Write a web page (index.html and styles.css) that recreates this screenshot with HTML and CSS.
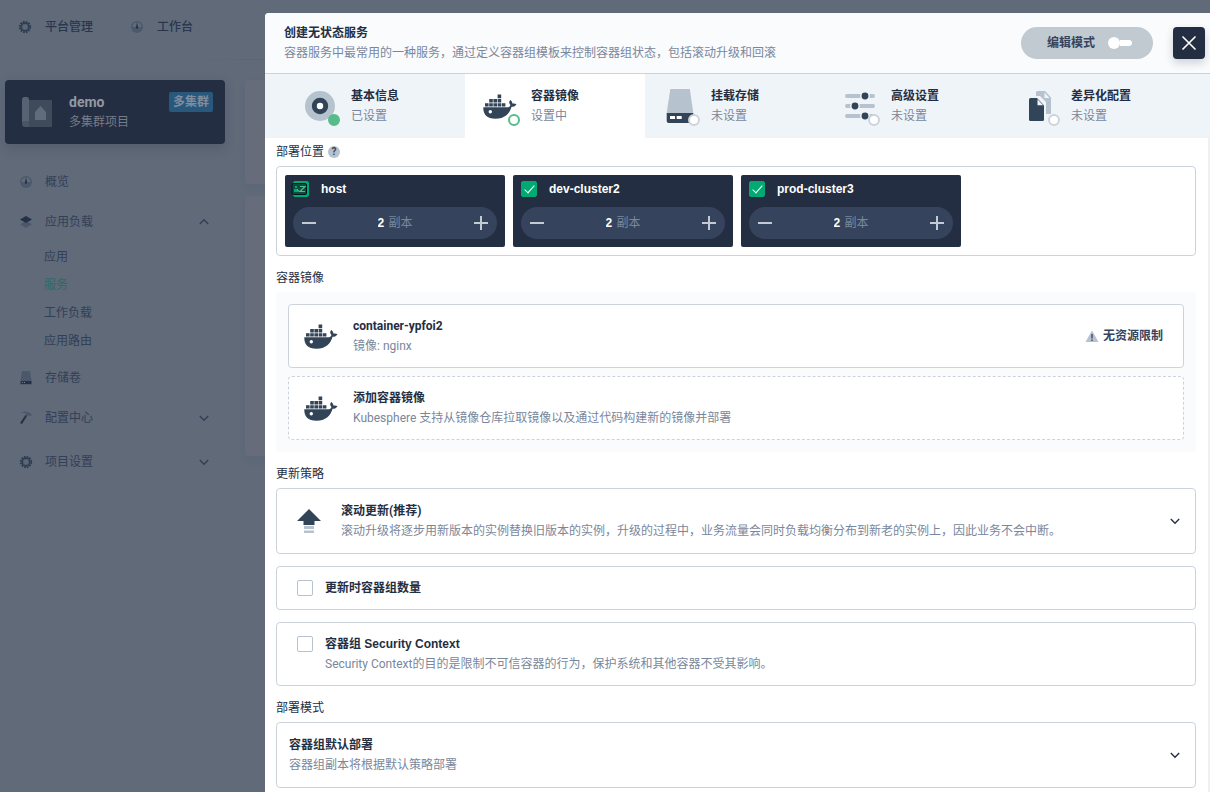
FILE: index.html
```html
<!DOCTYPE html>
<html lang="zh-CN">
  <head>
    <meta charset="utf-8" />
    <title>创建无状态服务</title>
    <link rel="stylesheet" href="styles.css">
  </head>
  <body>
    <!-- shared icons -->
    <svg class="sprite" aria-hidden="true">
      <symbol id="docker" viewBox="0 0 40 40">
        <path fill="#324558" d="M3.3 21.3H27c2 0 3-.9 3.4-2.300-1.500-1.500-1.600-3.500-.2-4.900 1.500.9 2.100 2.100 2.200 3.500 1.500-.3 3-.2 4.100.6-.9 1.700-2.600 2.600-4.900 2.600C29.500 28 24.500 32.800 15.500 32.800 7 32.800 3 28.500 3.300 21.300z" />
        <path fill="#324558" d="M5 17.200h3.600v3.300H5zM9.200 17.200h3.600v3.300H9.200zM13.400 17.200H17v3.300h-3.600zM17.600 17.200h3.600v3.300h-3.600zM21.800 17.200h3.600v3.300h-3.600zM9.200 13h3.600v3.500H9.200zM13.400 13H17v3.500h-3.600zM17.600 13h3.600v3.500h-3.600zM17.600 8.500h3.600v3.700h-3.600z" />
        <circle cx="10.300" cy="25.700" r="1.700" fill="#fff" />
      </symbol>
      <symbol id="chevron" viewBox="0 0 16 16">
        <path fill="none" stroke="currentColor" stroke-width="1.400" d="M3.800 6 8 10.200 12.200 6" />
      </symbol>
      <symbol id="gear" viewBox="0 0 16 16">
        <circle cx="8" cy="8" r="5.300" fill="none" stroke="#2c3a51" stroke-width="1.700" stroke-dasharray="1.700 1.075" />
        <circle cx="8" cy="8" r="4" fill="#4d596b" stroke="#2c3a51" stroke-width="1.400" />
        <circle cx="8" cy="8" r="2.400" fill="#5c6878" />
      </symbol>
      <symbol id="compass" viewBox="0 0 16 16">
        <circle cx="8" cy="8" r="6" fill="#4b596b" />
        <path fill="#5f6c7c" d="M3.500 8a4.500 4.500 0 0 1 9 0z" />
        <path fill="#253248" d="M8 3.500 9.200 8.500a1.200 1.200 0 1 1-2.400 0z" />
      </symbol>
    </svg>

    <div class="page">
      <nav class="topbar">
        <a href="#"><svg class="icon"><use href="#gear" /></svg>平台管理</a>
        <a href="#"><svg class="icon"><use href="#compass" /></svg>工作台</a>
      </nav>
      <div class="workspace">
        <aside class="sidebar">
          <div class="project">
            <svg class="project-icon" viewBox="0 0 30 30">
              <path fill="#3f4a5b" d="M5 3h25v27H5z" />
              <path fill="#586272" d="M0 3a3 3 0 0 1 7 0v22H0z" />
              <path fill="#495465" d="M3 24h4v6H3a3 3 0 0 1 0-6z" />
              <path fill="#626b7b" d="M13 15l5.500-6 5.500 6v8H13z" />
            </svg>
            <div class="project-text">
              <strong>demo</strong>
              <span>多集群项目</span>
            </div>
            <span class="badge">多集群</span>
          </div>

          <ul class="menu">
            <li><a href="#"><svg class="icon"><use href="#compass" /></svg>概览</a></li>
            <li>
              <a href="#">
                <svg class="icon" viewBox="0 0 16 16">
                  <path fill="#4b586b" d="M2 10.200 8 7l6 3.200L8 14z" />
                  <path fill="#243147" d="M2 5.500 8 2l6 3.500L8 9z" />
                </svg>应用负载
                <svg class="icon arrow up"><use href="#chevron" /></svg>
              </a>
              <ul class="submenu">
                <li><a href="#">应用</a></li>
                <li><a href="#" class="active">服务</a></li>
                <li><a href="#">工作负载</a></li>
                <li><a href="#">应用路由</a></li>
              </ul>
            </li>
            <li>
              <a href="#">
                <svg class="icon" viewBox="0 0 16 16">
                  <path fill="#4b586b" d="M4 1h8l1.500 10h-11z" />
                  <path fill="#243147" d="M2.500 11h11v3.200h-11z" />
                  <path fill="#7b8594" d="M4 12h1v1H4zM6 12h1v1H6z" />
                </svg>存储卷
              </a>
            </li>
            <li>
              <a href="#">
                <svg class="icon" viewBox="0 0 16 16">
                  <path fill="#4b586b" d="M3.500 3C6 1 9 1 11 2.500L13.500 4v2l-3-.5-2 1L8 4C7 3 5 2.800 3.500 3z" />
                  <path fill="#243147" d="M7.500 5 9 6 4 14l-2-1z" />
                </svg>配置中心
                <svg class="icon arrow"><use href="#chevron" /></svg>
              </a>
            </li>
            <li class="settings">
              <a href="#">
                <svg class="icon"><use href="#gear" /></svg>项目设置
                <svg class="icon arrow"><use href="#chevron" /></svg>
              </a>
            </li>
          </ul>
        </aside>
        <main class="cards">
          <div class="card short"></div>
          <div class="card tall"></div>
        </main>
      </div>
    </div>

    <section class="modal" role="dialog" aria-labelledby="modal-title">
      <header class="modal-header">
        <div class="text">
          <strong id="modal-title">创建无状态服务</strong>
          <p>容器服务中最常用的一种服务，通过定义容器组模板来控制容器组状态，包括滚动升级和回滚</p>
        </div>
        <label class="edit-mode">编辑模式 <input type="checkbox" role="switch" class="switch"></label>
        <button class="close" aria-label="关闭">
          <svg viewBox="0 0 32 32"><path stroke="#fff" stroke-width="1.600" d="M9.500 9.500l13 13M22.500 9.500l-13 13" /></svg>
        </button>
      </header>

      <nav class="steps">
        <button class="step">
          <span class="step-icon done">
            <svg viewBox="0 0 40 40">
              <circle cx="20" cy="20" r="15" fill="#b6c2cd" />
              <circle cx="20" cy="20" r="5.700" fill="#fff" stroke="#324558" stroke-width="5" />
            </svg>
          </span>
          <span class="text"><strong>基本信息</strong><span>已设置</span></span>
        </button>
        <button class="step current">
          <span class="step-icon"><svg><use href="#docker" /></svg></span>
          <span class="text"><strong>容器镜像</strong><span>设置中</span></span>
        </button>
        <button class="step">
          <span class="step-icon">
            <svg viewBox="0 0 40 40">
              <path fill="#b6c2cd" d="M10.300 3h19.500l3.500 24H6.700z" />
              <path fill="#324558" d="M6.700 27h26.600v8a2 2 0 0 1-2 2H8.700a2 2 0 0 1-2-2z" />
              <path fill="#fff" d="M10 30h5v3h-5zM16.700 30h5v3h-5z" />
            </svg>
          </span>
          <span class="text"><strong>挂载存储</strong><span>未设置</span></span>
        </button>
        <button class="step">
          <span class="step-icon">
            <svg viewBox="0 0 40 40">
              <path stroke="#b6c2cd" stroke-width="4" stroke-linecap="round" d="M7 10h26M7 20h26M7 30h26" />
              <g fill="#324558" stroke="#eff4f9" stroke-width="1.500">
                <circle cx="25" cy="10" r="4.200" />
                <circle cx="15" cy="20" r="4.200" />
                <circle cx="25" cy="30" r="4.200" />
              </g>
            </svg>
          </span>
          <span class="text"><strong>高级设置</strong><span>未设置</span></span>
        </button>
        <button class="step">
          <span class="step-icon">
            <svg viewBox="0 0 40 40">
              <path fill="#b6c2cd" d="M17.500 5H25l6 6.500V28h-5V16l-6-6h-4V6.500A1.500 1.500 0 0 1 17.500 5z" />
              <path fill="#eff4f9" d="M24.500 6.500v5.500h5z" />
              <path fill="#324558" d="M10.500 12H17l7 7.500v14a1.500 1.500 0 0 1-1.500 1.500h-12A1.500 1.500 0 0 1 9 33.500v-20a1.500 1.500 0 0 1 1.500-1.500z" />
              <path fill="#eff4f9" d="M17.500 13.200v6h5.600z" />
            </svg>
          </span>
          <span class="text"><strong>差异化配置</strong><span>未设置</span></span>
        </button>
      </nav>

      <form class="modal-body">
        <h3>部署位置 <span class="help" title="部署位置">?</span></h3>
        <div class="box clusters">
          <div class="cluster">
            <label>
              <span class="check">
                <input type="checkbox" class="checkbox" checked>
                <svg class="cluster-mark" viewBox="0 0 18 16">
                  <rect x="1" y="2.500" width="14.500" height="11" rx="1.500" fill="#0b4c43" stroke="#05171c" />
                  <path fill="#00aa72" d="M4 5h2v2H4zM3 8h4v3H3z" />
                  <path fill="none" stroke="#55bc8a" stroke-width="1.200" d="M9 5.500h5L9 10.500h5M6 8l2 2.500" />
                </svg>
              </span>
              host
            </label>
            <div class="replicas">
              <button type="button" class="minus" aria-label="减少"></button>
              <label><input type="text" value="2"> 副本</label>
              <button type="button" class="plus" aria-label="增加"></button>
            </div>
          </div>
          <div class="cluster">
            <label><input type="checkbox" class="checkbox" checked>dev-cluster2</label>
            <div class="replicas">
              <button type="button" class="minus" aria-label="减少"></button>
              <label><input type="text" value="2"> 副本</label>
              <button type="button" class="plus" aria-label="增加"></button>
            </div>
          </div>
          <div class="cluster">
            <label><input type="checkbox" class="checkbox" checked>prod-cluster3</label>
            <div class="replicas">
              <button type="button" class="minus" aria-label="减少"></button>
              <label><input type="text" value="2"> 副本</label>
              <button type="button" class="plus" aria-label="增加"></button>
            </div>
          </div>
        </div>

        <h3>容器镜像</h3>
        <div class="containers">
          <div class="box container">
            <svg class="box-icon"><use href="#docker" /></svg>
            <div class="text"><strong>container-ypfoi2</strong><p>镜像: nginx</p></div>
            <span class="limit">
              <svg viewBox="0 0 14 14">
                <path fill="#b6c2cd" d="M7 1.500 13.500 13H.5z" />
                <path stroke="#4a5974" stroke-width="1.600" d="M7 5v4.500M7 10.500V12" />
              </svg>
              无资源限制
            </span>
          </div>
          <button type="button" class="box container add">
            <svg class="box-icon"><use href="#docker" /></svg>
            <span class="text"><strong>添加容器镜像</strong><span>Kubesphere 支持从镜像仓库拉取镜像以及通过代码构建新的镜像并部署</span></span>
          </button>
        </div>

        <h3>更新策略</h3>
        <button type="button" class="box select">
          <svg class="box-icon" viewBox="0 0 40 40">
            <path fill="#324558" d="M20 8l12 12h-6.500v4h-11v-4H8z" />
            <path fill="#b6c2cd" d="M15 25h10v3H15zM15 29.500h10V32H15z" />
          </svg>
          <span class="text"><strong>滚动更新(推荐)</strong><span>滚动升级将逐步用新版本的实例替换旧版本的实例，升级的过程中，业务流量会同时负载均衡分布到新老的实例上，因此业务不会中断。</span></span>
          <svg class="icon"><use href="#chevron" /></svg>
        </button>
        <label class="box option">
          <input type="checkbox" class="checkbox">
          <span class="text"><strong>更新时容器组数量</strong></span>
        </label>
        <label class="box option">
          <input type="checkbox" class="checkbox">
          <span class="text"><strong>容器组 Security Context</strong><span>Security Context的目的是限制不可信容器的行为，保护系统和其他容器不受其影响。</span></span>
        </label>

        <h3>部署模式</h3>
        <button type="button" class="box select">
          <span class="text"><strong>容器组默认部署</strong><span>容器组副本将根据默认策略部署</span></span>
          <svg class="icon"><use href="#chevron" /></svg>
        </button>
      </form>
    </section>
  </body>
</html>
```
FILE: styles.css
```css
*,
*::before,
*::after {
  box-sizing: border-box;
}

body {
  margin: 0;
  min-height: 100vh;
  background: #606a79;
  color: #242e42;
  overflow: hidden;
}

body,
button,
input {
  font-family: Roboto, "Noto Sans CJK SC", sans-serif;
  font-size: 12px;
  line-height: 20px;
}

button {
  border: none;
  padding: 0;
  color: inherit;
  text-align: left;
  cursor: pointer;
}

a {
  color: inherit;
  text-decoration: none;
}

ul,
p,
h3 {
  margin: 0;
  padding: 0;
  list-style: none;
}

strong {
  font-weight: 700;
}

.sprite {
  position: absolute;
  width: 0;
  height: 0;
}

.icon {
  width: 16px;
  height: 16px;
  flex: none;
}

/* dimmed page behind the dialog */
.topbar {
  display: flex;
  align-items: center;
  gap: 36px;
  height: 60px;
  padding: 0 17px 6px;
  color: #29364d;
  font-weight: 500;
  background: linear-gradient(90deg, transparent 180px, #5c6575 265px) bottom / 100% 1px no-repeat;
}

.topbar a {
  display: flex;
  align-items: center;
  gap: 12px;
}

.workspace {
  display: flex;
  gap: 20px;
  padding: 20px 20px 0 5px;
}

.sidebar {
  width: 220px;
  flex: none;
}

.project {
  display: flex;
  align-items: flex-start;
  height: 64px;
  padding: 12px 12px 12px 17px;
  border-radius: 4px;
  background: #242e42;
  box-shadow: 0 4px 12px rgba(36, 46, 66, 0.2);
  color: #747c8a;
}

.project-icon {
  width: 30px;
  height: 30px;
  margin: 5px 17px 0 0;
}

.project-text {
  flex: 1;
}

.project-text strong,
.project-text span {
  display: block;
}

.project-text strong {
  font-size: 14px;
  color: #9298a3;
}

.badge {
  padding: 0 4px;
  border-radius: 2px;
  background: #28587b;
  color: #7f8d9e;
  font-weight: 700;
}

.menu {
  margin-top: 18px;
  color: #323f57;
}

.menu > li > a {
  display: flex;
  align-items: center;
  gap: 11px;
  height: 40px;
  padding: 0 13px;
}

.menu .arrow {
  margin-left: auto;
}

.menu .up {
  transform: rotate(180deg);
}

.submenu {
  padding: 1px 0 3px 39px;
}

.submenu a {
  display: block;
  line-height: 28px;
}

.submenu .active {
  color: #2e6b62;
}

.settings {
  margin-top: 4px;
}

.cards {
  flex: 1;
}

.card {
  margin-bottom: 12px;
  border-radius: 4px;
  background: #676c7b;
  box-shadow: 0 4px 8px rgba(36, 46, 66, 0.06);
}

.short {
  height: 104px;
}

.tall {
  height: 260px;
}

/* dialog */
.modal {
  position: fixed;
  top: 13px;
  right: 0;
  bottom: 0;
  left: 265px;
  display: flex;
  flex-direction: column;
  border-radius: 4px 0 0 0;
  background: #fff;
  overflow: hidden;
}

.modal-header {
  display: flex;
  align-items: center;
  gap: 20px;
  padding: 10px 5px 10px 19px;
  border-bottom: 1px solid #ccd3db;
  background: #f9fbfd;
}

.text {
  flex: 1;
  min-width: 0;
  color: #79879c;
}

.text strong,
.text span {
  display: block;
}

.text strong {
  color: #242e42;
}

.edit-mode {
  display: flex;
  align-items: center;
  gap: 13px;
  height: 32px;
  padding: 0 21px 0 26px;
  border-radius: 16px;
  background: #c1c9d1;
  color: #36435c;
  font-weight: 700;
}

.switch {
  appearance: none;
  display: flex;
  align-items: center;
  width: 24px;
  height: 12px;
  margin: 0;
}

.switch::before {
  content: "";
  width: 12px;
  height: 12px;
  border-radius: 50%;
  background: #fff;
}

.switch::after {
  content: "";
  width: 12px;
  height: 6px;
  border-radius: 0 3px 3px 0;
  background: #fff;
}

.close {
  width: 32px;
  height: 32px;
  border-radius: 4px;
  background: #242e42;
  box-shadow: 0 4px 8px rgba(36, 46, 66, 0.2);
}

.close svg {
  display: block;
}

.steps {
  display: flex;
  background: #eff4f9;
}

.step {
  display: flex;
  gap: 11px;
  width: 180px;
  padding: 12px 0 12px 15px;
  background: none;
}

.step:first-child {
  width: 200px;
  padding-left: 35px;
}

.step.current {
  background: #fff;
}

.step-icon {
  position: relative;
  width: 40px;
  height: 40px;
}

.step-icon svg {
  display: block;
  width: 40px;
  height: 40px;
}

.step-icon::after {
  content: "";
  position: absolute;
  right: 0;
  bottom: 0;
  width: 12px;
  height: 12px;
  border: 2px solid #ccd3db;
  border-radius: 50%;
  background: #fff;
}

.step-icon.done::after {
  border-color: #55bc8a;
  background: #55bc8a;
}

.current .step-icon::after {
  border-color: #55bc8a;
}

.modal-body {
  flex: 1;
  padding: 4px 12px 4px 11px;
  border-right: 2px solid #f0f0f0;
  overflow: hidden;
}

h3 {
  display: flex;
  align-items: center;
  gap: 4px;
  margin-bottom: 4px;
  font-size: 12px;
  font-weight: 400;
}

.box + h3,
.containers + h3 {
  margin-top: 12px;
}

.help {
  width: 12px;
  height: 12px;
  border-radius: 50%;
  background: #b6c2cd;
  color: #324558;
  font-size: 10px;
  font-weight: 700;
  line-height: 12px;
  text-align: center;
}

.box {
  display: flex;
  width: 100%;
  border: 1px solid #ccd3db;
  border-radius: 4px;
  background: #fff;
}

.box + .box {
  margin-top: 12px;
}

.clusters {
  gap: 8px;
  padding: 8px;
}

.cluster {
  width: 220px;
  padding: 4px 8px 8px;
  border-radius: 2px;
  background: #242e42;
  color: #fff;
}

.cluster > label {
  display: flex;
  align-items: center;
  gap: 12px;
  font-weight: 700;
}

.cluster > label,
.replicas input,
.option strong {
  font-family: "Liberation Sans", "Noto Sans CJK SC", sans-serif;
}

.check {
  position: relative;
  height: 16px;
}

.cluster-mark {
  position: absolute;
  top: 0;
  left: -2px;
  width: 18px;
  height: 16px;
}

.checkbox {
  appearance: none;
  display: block;
  flex: none;
  width: 16px;
  height: 16px;
  margin: 0;
  border: 1px solid #b6c2cd;
  border-radius: 2px;
  background: #fff;
}

.checkbox:checked {
  border-color: #00aa72;
  background: #00aa72;
}

.checkbox:checked::after {
  content: "";
  display: block;
  width: 5px;
  height: 10px;
  margin: 1px 0 0 5px;
  border: solid #fff;
  border-width: 0 1px 1px 0;
  transform: rotate(42deg);
}

.replicas {
  display: flex;
  align-items: center;
  justify-content: space-between;
  height: 32px;
  margin-top: 8px;
  padding: 0 8px;
  border-radius: 16px;
  background: #36435c;
  color: #79879c;
}

.replicas input {
  width: 8px;
  padding: 0;
  border: none;
  background: none;
  color: #fff;
  font-weight: 700;
}

.replicas button {
  width: 16px;
  height: 16px;
}

.minus {
  background: linear-gradient(#c4cad3, #c4cad3) center / 14px 2px no-repeat;
}

.plus {
  background:
    linear-gradient(#c4cad3, #c4cad3) center / 14px 2px no-repeat,
    linear-gradient(#c4cad3, #c4cad3) center / 2px 14px no-repeat;
}

.containers {
  padding: 12px;
  border-radius: 4px;
  background: #f9fbfd;
}

.container {
  align-items: center;
  gap: 12px;
  padding: 11px 20px 11px 12px;
}

.containers .add {
  margin-top: 8px;
  border-style: dashed;
}

.box-icon {
  width: 40px;
  height: 40px;
  flex: none;
}

.limit {
  display: flex;
  align-items: center;
  gap: 4px;
  color: #36435c;
  font-weight: 700;
}

.limit svg {
  width: 14px;
  height: 14px;
}

.select {
  align-items: center;
  gap: 12px;
  padding: 12px;
}

.option {
  gap: 12px;
  padding: 11px 20px;
}

.option .checkbox {
  margin-top: 2px;
}
```
